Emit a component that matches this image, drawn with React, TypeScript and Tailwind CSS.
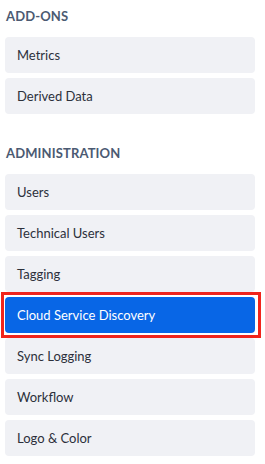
import React from 'react';

const addOns = ['Metrics', 'Derived Data'];
const administration = [
  'Users',
  'Technical Users',
  'Tagging',
  'Cloud Service Discovery',
  'Sync Logging',
  'Workflow',
  'Logo & Color',
];

const ACTIVE = 'Cloud Service Discovery';

const NavItem: React.FC<{ label: string; active?: boolean }> = ({ label, active }) => (
  <div className="relative">
    <button
      className={`w-full h-[36px] rounded-[4px] px-3 text-left text-[13px] leading-none ${
        active ? 'bg-[#0866e6] text-white' : 'bg-[#f0f1f5] text-[#2c303b]'
      }`}
    >
      {label}
    </button>
    {/* highlight annotation */}
    {active && (
      <div className="absolute -left-[4px] -top-[5px] w-[260px] h-[46px] border-[3px] border-[#f0241c] pointer-events-none"></div>
    )}
  </div>
);

const Section: React.FC<{ title: string; items: string[]; className?: string }> = ({ title, items, className }) => (
  <div className={className}>
    <h3 className="h-4 pl-[1px] text-[13px] leading-4 font-bold tracking-[0.01em] text-[#4b5a72]">{title}</h3>
    <div className="mt-[13px] flex flex-col gap-[5px]">
      {items.map((item) => (
        <NavItem key={item} label={item} active={item === ACTIVE} />
      ))}
    </div>
  </div>
);

export default function App() {
  return (
    <div className="w-[265px] h-[464px] bg-white pl-[5px] pr-[10px] pt-[8px]" style={{ fontFamily: 'Lato, "Noto Sans", sans-serif' }}>
      <Section title="ADD-ONS" items={addOns} />
      <Section title="ADMINISTRATION" items={administration} className="mt-[31px]" />
    </div>
  );
}
